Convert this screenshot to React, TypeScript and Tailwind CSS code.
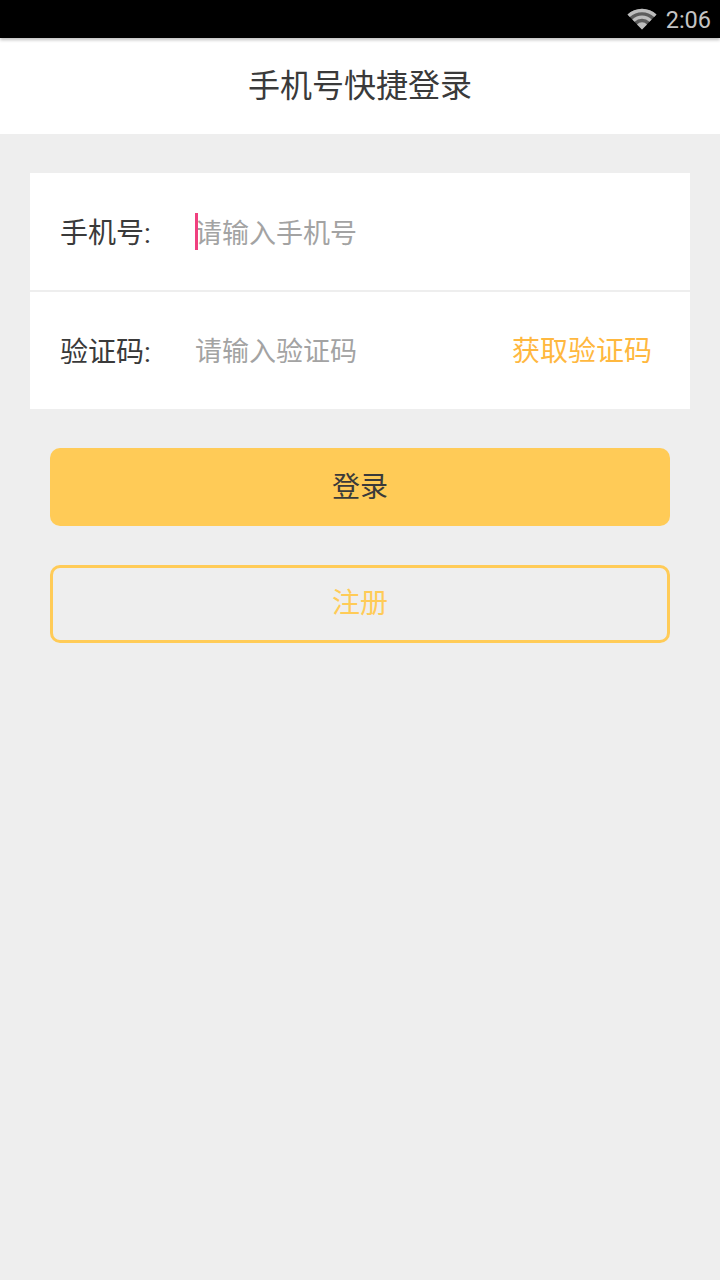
const font = "[font-family:'Roboto','Noto_Sans_CJK_SC',sans-serif]";

function Wifi() {
  return (
    <svg width="30" height="22" viewBox="0 0 30 22" className="block">
      <path d="M0.5 6.5 A21 21 0 0 1 29.5 6.5 L15 21.5 Z" fill="#5c5c5c" />
      <path d="M0.5 6.5 A21 21 0 0 1 29.5 6.5 L27.2 8.9 A18 18 0 0 0 2.8 8.9 Z" fill="#bdbdbd" />
      <path d="M5.3 11.5 A14 14 0 0 1 24.7 11.5 L22.5 13.8 A11 11 0 0 0 7.5 13.8 Z" fill="#bdbdbd" />
      <path d="M10 16.4 A7 7 0 0 1 20 16.4 L15 21.5 Z" fill="#bdbdbd" />
    </svg>
  );
}

export default function App() {
  return (
    <div className={`${font} min-h-[1280px] bg-[#eeeeee] flex flex-col`}>
      <div className="relative z-10 h-[38px] bg-black flex items-center justify-end pr-[9px] gap-[9px] shadow-[0_2px_3px_rgba(0,0,0,0.25)]">
        <Wifi />
        <span className="pt-[3px] text-[23.5px] text-[#c4c4c4] leading-none">2:06</span>
      </div>
      <div className="h-[96px] bg-white flex items-center justify-center">
        <span className="text-[32px] text-[#3a3a3a]">手机号快捷登录</span>
      </div>

      <div className="mt-[39px] mx-[30px] bg-white flex flex-col">
        <div className="h-[117px] flex items-center pl-[30px]">
          <span className="w-[135px] pt-[4px] text-[28px] text-[#3a3a3a]">手机号:</span>
          <div className="relative">
            <span className="block pt-[3px] h-[35px] text-[27px] leading-[35px] text-[#a3a3a3]">请输入手机号</span>
            <div className="absolute left-0 top-[-1px] w-[3px] h-[37px] bg-[#f0407f]" />
          </div>
        </div>
        <div className="h-[2px] bg-[#eeeeee]" />
        <div className="h-[117px] flex items-center pl-[30px] pr-[38px]">
          <span className="w-[135px] pt-[4px] text-[28px] text-[#3a3a3a]">验证码:</span>
          <span className="pt-[4px] text-[27px] leading-[35px] text-[#a3a3a3]">请输入验证码</span>
          <span className="ml-auto pt-[2px] text-[28px] text-[#ffb83f]">获取验证码</span>
        </div>
      </div>

      <div className="mt-[39px] mx-[50px] h-[78px] pt-[2px] rounded-[10px] bg-[#ffcb57] flex items-center justify-center text-[28px] text-[#3a3a3a]">
        登录
      </div>
      <div className="mt-[39px] mx-[50px] h-[78px] rounded-[10px] border-[3px] border-[#ffcb57] flex items-center justify-center text-[28px] text-[#ffcb57]">
        注册
      </div>
    </div>
  );
}
